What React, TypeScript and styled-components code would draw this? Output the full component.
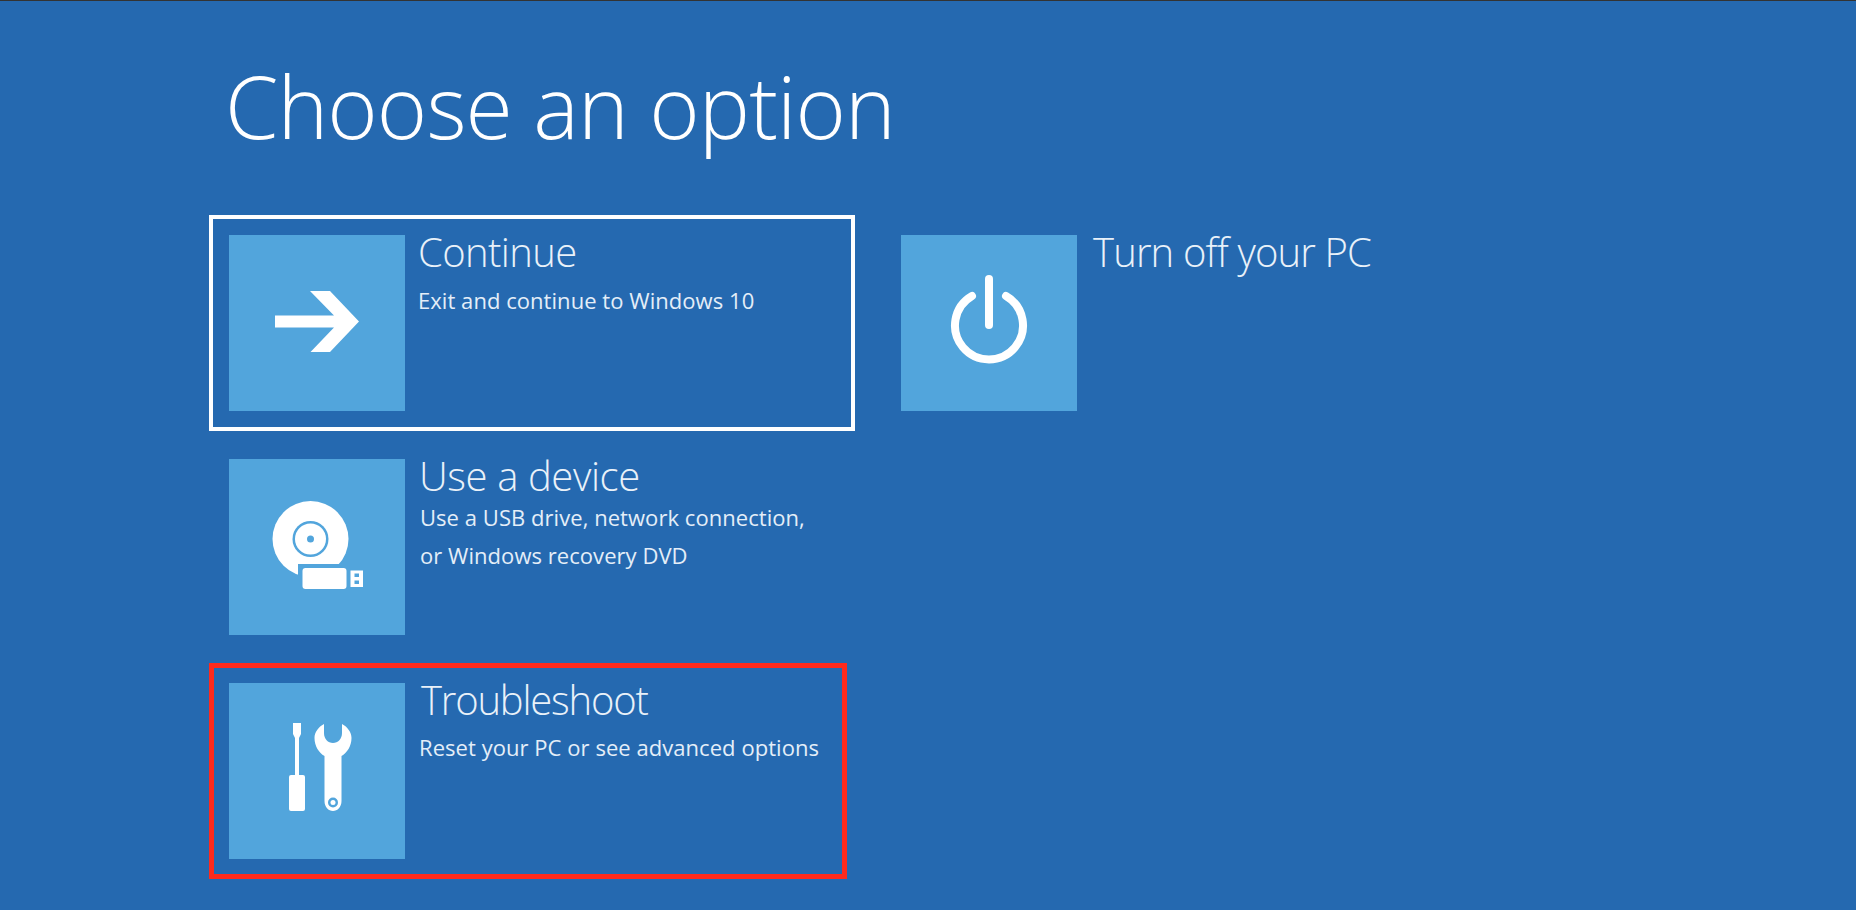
import * as React from 'react';
import styled, { createGlobalStyle } from 'styled-components';

const GlobalStyle = createGlobalStyle`
  html, body {
    margin: 0;
    padding: 0;
    background: #2569b0;
  }
`;

const Page = styled.div`
  box-sizing: border-box;
  width: 1856px;
  height: 910px;
  overflow: hidden;
  padding: 0 0 0 209px;
  background: #2569b0;
  border-top: 1px solid #333;
  color: #fff;
  font-family: "Open Sans", "Noto Sans", sans-serif;
  font-weight: 300;
`;

const Heading = styled.h1`
  margin: 0 0 0 16px;
  height: 214px;
  padding-top: 55px;
  box-sizing: border-box;
  font-size: 86px;
  line-height: 100px;
  font-weight: 300;
  letter-spacing: -0.9px;
`;

const Columns = styled.div`
  display: flex;
  gap: 26px;
  align-items: flex-start;
`;

const Column = styled.div`
  display: flex;
  flex-direction: column;
  gap: 8px;
`;

const TONES = {
  focus: { color: '#ffffff', size: 4 },
  marked: { color: '#ff2a1c', size: 5 },
  none: { color: 'transparent', size: 4 },
};

const Option = styled.div<{ $tone: keyof typeof TONES; $width: number }>`
  box-sizing: border-box;
  display: flex;
  width: ${({ $width }) => $width}px;
  height: 216px;
  padding: ${({ $tone }) => 20 - TONES[$tone].size}px;
  border: ${({ $tone }) => TONES[$tone].size}px solid ${({ $tone }) => TONES[$tone].color};
`;

const Tile = styled.div`
  flex: none;
  width: 176px;
  height: 176px;
  background: #52a5dc;

  svg {
    display: block;
  }
`;

const Body = styled.div<{ $inset: number }>`
  margin-left: ${({ $inset }) => $inset}px;
`;

const Title = styled.div<{ $track: number }>`
  font-size: 40px;
  line-height: 44px;
  margin-top: -5px;
  letter-spacing: ${({ $track }) => $track}px;
  color: #e9f1f9;
  white-space: nowrap;
`;

const Description = styled.div<{ $top: number; $left?: number }>`
  margin: ${({ $top }) => $top}px 0 0 ${({ $left }) => $left ?? 0}px;
  font-size: 22px;
  font-weight: 400;
  line-height: 38px;
  letter-spacing: 0.05px;
  color: #e4eef8;
  white-space: nowrap;
`;

const TILE_BLUE = '#52a5dc';

const ArrowIcon = () => (
  <svg width="176" height="176" viewBox="0 0 176 176" fill="#fff">
    <path d="M46 80.500H105L81 56H101L130 86.500 101 117H81.500L105 92.500H46z" />
  </svg>
);

const PowerIcon = () => (
  <svg width="176" height="176" viewBox="0 0 176 176" fill="none" stroke="#fff" strokeWidth="8" strokeLinecap="round">
    <path d="M71 61A34 34 0 1 0 105 61" />
    <path d="M88 44V90" />
  </svg>
);

const DeviceIcon = () => (
  <svg width="176" height="176" viewBox="0 0 176 176" fill="#fff">
    <circle cx="81.500" cy="80" r="38" />
    <circle cx="81.500" cy="80" r="18" fill={TILE_BLUE} />
    <circle cx="81.500" cy="80" r="15.500" />
    <circle cx="81.500" cy="80" r="3.500" fill={TILE_BLUE} />
    <path d="M69 105H122V140H69z" fill={TILE_BLUE} />
    <rect x="73.500" y="109" width="44" height="21" rx="3" />
    <path d="M121.500 111.500H134V128H121.500z" />
    <path d="M125.500 114.500H130V118H125.500zM125.500 121.500H130V125H125.500z" fill={TILE_BLUE} />
  </svg>
);

const ToolsIcon = () => (
  <svg width="176" height="176" viewBox="0 0 176 176" fill="#fff">
    <path d="M64 40H72V51L70 55V92H74Q76 92 76 94V126Q76 128 74 128H62Q60 128 60 126V94Q60 92 62 92H66V55L64 51z" />
    <path d="M95 41V50C95 56 99 60 104 60S113 56 113 50V41C118.500 44 122.500 49 122.500 55 122.500 63 118 70 112.500 73V118C112.500 124 108.500 128 104 128S95.500 124 95.500 118V73C90 70 85.500 63 85.500 55 85.500 49 89.500 44 95 41z" />
    <circle cx="104" cy="119.500" r="5" fill={TILE_BLUE} />
    <circle cx="104" cy="119.500" r="2.500" />
  </svg>
);

export default function App() {
  return (
    <Page>
      <GlobalStyle />
      <Heading>Choose an option</Heading>
      <Columns>
        <Column>
          <Option $tone="focus" $width={646}>
            <Tile><ArrowIcon /></Tile>
            <Body $inset={13}>
              <Title $track={-0.6}>Continue</Title>
              <Description $top={7}>Exit and continue to Windows 10</Description>
            </Body>
          </Option>
          <Option $tone="none" $width={646}>
            <Tile><DeviceIcon /></Tile>
            <Body $inset={14}>
              <Title $track={-0.4}>Use a device</Title>
              <Description $top={0} $left={1}>
                Use a USB drive, network connection,<br />or Windows recovery DVD
              </Description>
            </Body>
          </Option>
          <Option $tone="marked" $width={638}>
            <Tile><ToolsIcon /></Tile>
            <Body $inset={16}>
              <Title $track={-1.2}>Troubleshoot</Title>
              <Description $top={6} $left={-2}>Reset your PC or see advanced options</Description>
            </Body>
          </Option>
        </Column>
        <Column>
          <Option $tone="none" $width={400}>
            <Tile><PowerIcon /></Tile>
            <Body $inset={16}>
              <Title $track={-0.85}>Turn off your PC</Title>
            </Body>
          </Option>
        </Column>
      </Columns>
    </Page>
  );
}
